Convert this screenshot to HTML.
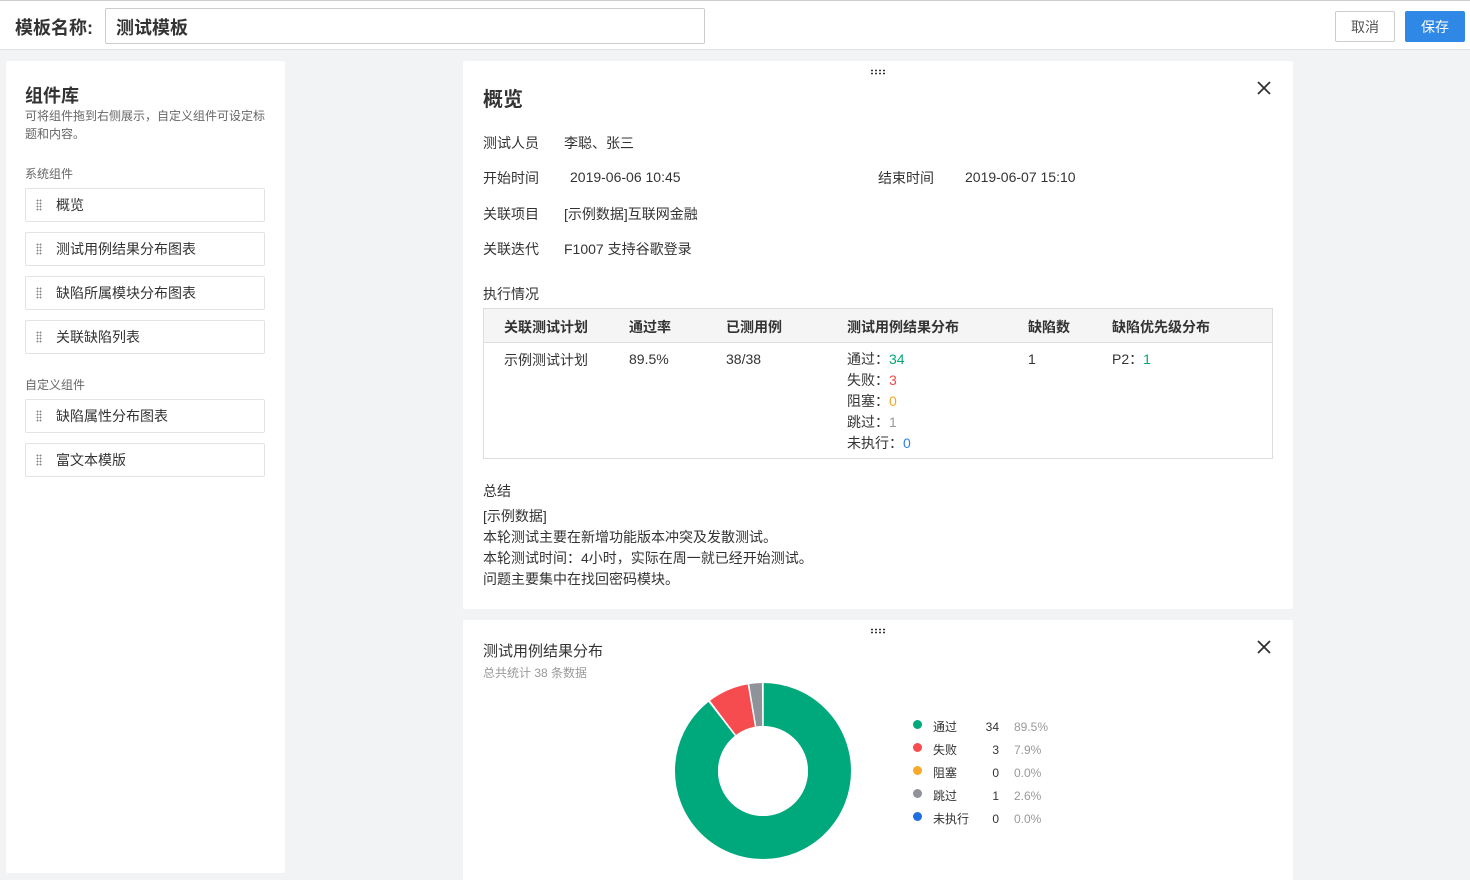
<!DOCTYPE html>
<html><head><meta charset="utf-8"><style>
*{box-sizing:border-box;margin:0;padding:0}
body{width:1470px;height:876px;overflow:hidden;background:#f2f3f5;font-family:"Liberation Sans","Noto Sans CJK SC",sans-serif;color:#333;position:relative}
.hdr{position:absolute;left:0;top:0;width:1470px;height:50px;background:#fff;border-top:1px solid #ccc;border-bottom:1px solid #e2e2e2}
.abs{position:absolute}
.side{position:absolute;left:6px;top:61px;width:279px;height:812px;background:#fff;border-radius:2px}
.item{position:absolute;left:19px;width:240px;height:34px;border:1px solid #e3e3e3;border-radius:2px;font-size:14px;line-height:33px;padding-left:30px;color:#333}
.item .dots{position:absolute;left:10px;top:10px;width:6px;height:12px;background-image:radial-gradient(circle,#888 0.9px,transparent 1px);background-size:3px 3px}
.card{position:absolute;left:463px;width:830px;background:#fff;border-radius:2px}
.grip{position:absolute;left:407px;width:16px;height:6px;background-image:radial-gradient(circle,#333 0.8px,transparent 0.9px);background-size:4px 3px}
.x{position:absolute;left:793px;width:16px;height:16px}
.t{position:absolute;font-size:14px;white-space:nowrap}
.lg span{position:absolute;white-space:nowrap}
</style></head><body>
<div class="hdr">
 <div class="abs" style="left:15px;top:13px;font-size:18px;font-weight:bold;color:#333">模板名称:</div>
 <div class="abs" style="left:105px;top:7px;width:600px;height:36px;border:1px solid #ccc;border-radius:2px;font-size:18px;padding:5px 10px;font-weight:bold">测试模板</div>
 <div class="abs" style="left:1335px;top:10px;width:60px;height:31px;border:1px solid #ccc;border-radius:2px;font-size:14px;line-height:31px;text-align:center;color:#555">取消</div>
 <div class="abs" style="left:1405px;top:10px;width:60px;height:31px;background:#2f88e6;border-radius:2px;font-size:14px;line-height:33px;text-align:center;color:#fff">保存</div>
</div>
<div class="side">
 <div class="abs" style="left:19px;top:21px;font-size:18px;font-weight:bold">组件库</div>
 <div class="abs" style="left:19px;top:46px;width:245px;font-size:12px;line-height:18px;color:#666">可将组件拖到右侧展示，自定义组件可设定标题和内容。</div>
 <div class="abs" style="left:19px;top:104px;font-size:12px;color:#666">系统组件</div>
 <div class="item" style="top:127px"><span class="dots"></span>概览</div>
 <div class="item" style="top:171px"><span class="dots"></span>测试用例结果分布图表</div>
 <div class="item" style="top:215px"><span class="dots"></span>缺陷所属模块分布图表</div>
 <div class="item" style="top:259px"><span class="dots"></span>关联缺陷列表</div>
 <div class="abs" style="left:19px;top:315px;font-size:12px;color:#666">自定义组件</div>
 <div class="item" style="top:338px"><span class="dots"></span>缺陷属性分布图表</div>
 <div class="item" style="top:382px"><span class="dots"></span>富文本模版</div>
</div>
<div class="card" style="top:61px;height:548px">
 <div class="grip" style="top:8px"></div>
 <svg class="x" style="top:19px" viewBox="0 0 16 16"><path d="M2 2L14 14M14 2L2 14" stroke="#333" stroke-width="1.8"/></svg>
 <div class="t" style="left:20px;top:22px;font-size:20px;font-weight:bold">概览</div>
 <div class="t" style="left:20px;top:72px">测试人员</div><div class="t" style="left:101px;top:72px">李聪、张三</div>
 <div class="t" style="left:20px;top:107px">开始时间</div><div class="t" style="left:107px;top:108px">2019-06-06 10:45</div>
 <div class="t" style="left:415px;top:107px">结束时间</div><div class="t" style="left:502px;top:108px">2019-06-07 15:10</div>
 <div class="t" style="left:20px;top:143px">关联项目</div><div class="t" style="left:101px;top:143px">[示例数据]互联网金融</div>
 <div class="t" style="left:20px;top:178px">关联迭代</div><div class="t" style="left:101px;top:178px">F1007 支持谷歌登录</div>
 <div class="t" style="left:20px;top:223px">执行情况</div>
 <div class="abs" style="left:20px;top:247px;width:790px;height:151px;border:1px solid #ddd">
  <div class="abs" style="left:0;top:0;width:788px;height:34px;background:#f5f5f5;border-bottom:1px solid #ddd"></div>
  <div class="t" style="left:20px;top:8px;font-weight:bold">关联测试计划</div>
  <div class="t" style="left:145px;top:8px;font-weight:bold">通过率</div>
  <div class="t" style="left:242px;top:8px;font-weight:bold">已测用例</div>
  <div class="t" style="left:363px;top:8px;font-weight:bold">测试用例结果分布</div>
  <div class="t" style="left:544px;top:8px;font-weight:bold">缺陷数</div>
  <div class="t" style="left:628px;top:8px;font-weight:bold">缺陷优先级分布</div>
  <div class="t" style="left:20px;top:41px">示例测试计划</div>
  <div class="t" style="left:145px;top:42px">89.5%</div>
  <div class="t" style="left:242px;top:42px">38/38</div>
  <div class="t" style="left:363px;top:40px;line-height:21px">通过：<span style="color:#00a878">34</span><br>失败：<span style="color:#f04a4a">3</span><br>阻塞：<span style="color:#f5a623">0</span><br>跳过：<span style="color:#999">1</span><br>未执行：<span style="color:#2f80e6">0</span></div>
  <div class="t" style="left:544px;top:42px">1</div>
  <div class="t" style="left:628px;top:40px">P2：<span style="color:#00a878">1</span></div>
 </div>
 <div class="t" style="left:20px;top:420px">总结</div>
 <div class="t" style="left:20px;top:445px;line-height:21px">[示例数据]<br>本轮测试主要在新增功能版本冲突及发散测试。<br>本轮测试时间：4小时，实际在周一就已经开始测试。<br>问题主要集中在找回密码模块。</div>
</div>
<div class="card" style="top:620px;height:260px">
 <div class="grip" style="top:8px"></div>
 <svg class="x" style="top:19px" viewBox="0 0 16 16"><path d="M2 2L14 14M14 2L2 14" stroke="#333" stroke-width="1.8"/></svg>
 <div class="t" style="left:20px;top:20px;font-size:15px">测试用例结果分布</div>
 <div class="t" style="left:20px;top:44px;font-size:12px;color:#999">总共统计 38 条数据</div>
 <svg class="abs" style="left:210px;top:61px" width="180" height="180" viewBox="0 0 180 180">
  <g transform="rotate(-90 90 90)" fill="none" stroke-width="43">
   <circle cx="90" cy="90" r="66.5" stroke="#00a97b" stroke-dasharray="373.8 1000"/>
   <circle cx="90" cy="90" r="66.5" stroke="#f64c4f" stroke-dasharray="0 374.8 31.2 1000"/>
   <circle cx="90" cy="90" r="66.5" stroke="#8f9399" stroke-dasharray="0 407 9.8 1000"/>
  </g>
  <g stroke="#fff" stroke-width="1.5">
   <line x1="90" y1="90" x2="90" y2="0"/>
   <line x1="90" y1="90" x2="35" y2="19"/>
   <line x1="90" y1="90" x2="75" y2="0"/>
  </g>
  <circle cx="90" cy="90" r="45" fill="#fff"/>
 </svg>
 <div class="abs lg" style="left:450px;top:96px;width:200px;font-size:12px;line-height:23px">
  <div style="position:relative;height:23px"><span style="left:0;top:4px;width:9px;height:9px;border-radius:50%;background:#00a97b"></span><span style="left:20px">通过</span><span style="left:70px;width:16px;text-align:right">34</span><span style="left:101px;color:#999">89.5%</span></div>
  <div style="position:relative;height:23px"><span style="left:0;top:4px;width:9px;height:9px;border-radius:50%;background:#f64c4f"></span><span style="left:20px">失败</span><span style="left:70px;width:16px;text-align:right">3</span><span style="left:101px;color:#999">7.9%</span></div>
  <div style="position:relative;height:23px"><span style="left:0;top:4px;width:9px;height:9px;border-radius:50%;background:#f8a92b"></span><span style="left:20px">阻塞</span><span style="left:70px;width:16px;text-align:right">0</span><span style="left:101px;color:#999">0.0%</span></div>
  <div style="position:relative;height:23px"><span style="left:0;top:4px;width:9px;height:9px;border-radius:50%;background:#8f9399"></span><span style="left:20px">跳过</span><span style="left:70px;width:16px;text-align:right">1</span><span style="left:101px;color:#999">2.6%</span></div>
  <div style="position:relative;height:23px"><span style="left:0;top:4px;width:9px;height:9px;border-radius:50%;background:#1f6fe0"></span><span style="left:20px">未执行</span><span style="left:70px;width:16px;text-align:right">0</span><span style="left:101px;color:#999">0.0%</span></div>
 </div>
</div>
</body></html>
